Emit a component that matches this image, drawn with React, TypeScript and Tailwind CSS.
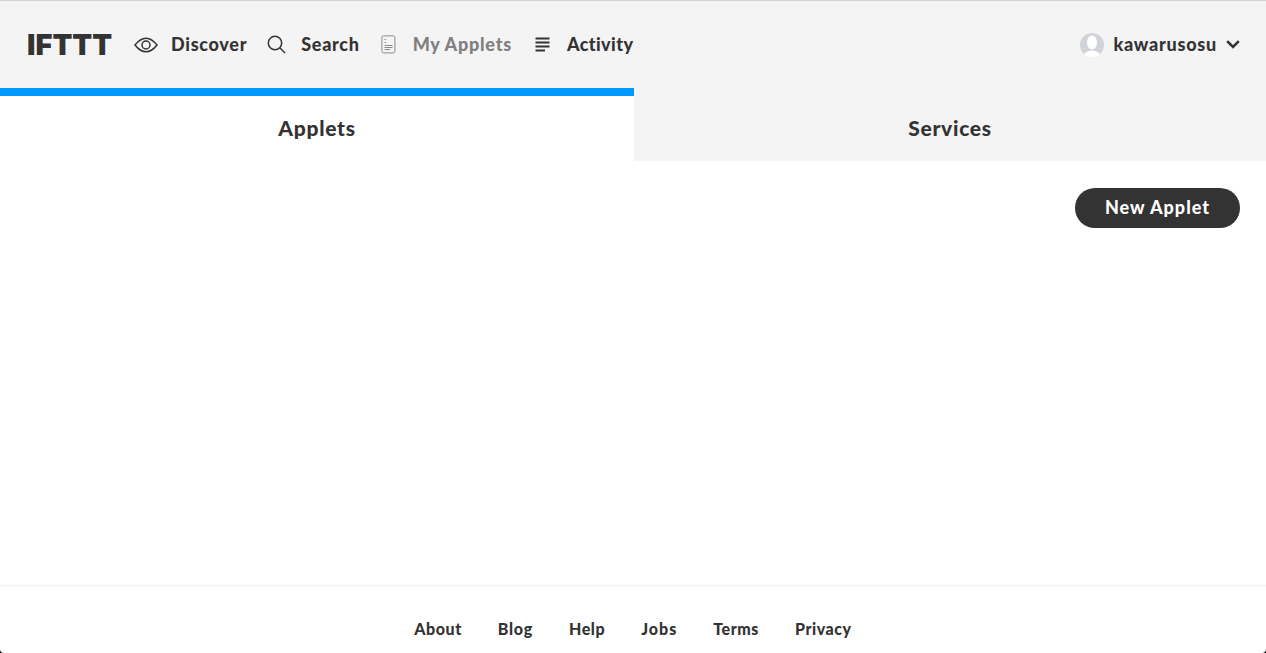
import React from "react";

const font = { fontFamily: "Lato, 'Open Sans', sans-serif" };

function Eye() {
  return (
    <svg width="24" height="16" viewBox="0 0 24 16" fill="none" stroke="#333" strokeWidth="1.5">
      <path d="M1 8C4.5 3.5 8 1.2 12 1.2S19.5 3.5 23 8C19.5 12.5 16 14.8 12 14.8S4.5 12.5 1 8Z" />
      <circle cx="12" cy="8" r="4" />
    </svg>
  );
}

function SearchIcon() {
  return (
    <svg width="19" height="19" viewBox="0 0 19 19" fill="none" stroke="#333" strokeWidth="1.5">
      <circle cx="8" cy="8" r="6.7" />
      <path d="M12.8 12.8L18 18" />
    </svg>
  );
}

function DocIcon() {
  return (
    <svg width="15" height="19" viewBox="0 0 15 19" fill="none" stroke="#8a8a8a" strokeWidth="1">
      <rect x="0.9" y="0.9" width="13" height="17" rx="1.5" />
      <path d="M3.5 4.5H5M3.5 7.5H5M3.5 10.5H11.5M3.5 12.5H11.5M3.5 14.5H9" />
    </svg>
  );
}

function ListIcon() {
  return (
    <svg width="15" height="15" viewBox="0 0 15 15" fill="none" stroke="#333" strokeWidth="2">
      <path d="M0.5 1.5H14.5M0.5 5.5H14.5M0.5 9.5H14.5M0.5 13.5H10" />
    </svg>
  );
}

function Avatar() {
  return (
    <svg width="24" height="24" viewBox="0 0 24 24">
      <circle cx="12" cy="12" r="12" fill="#d0d3d8" />
      <ellipse cx="12" cy="9.5" rx="5" ry="7" fill="#fff" />
      <path d="M4 21.5C6 18.5 9 17.5 12 17.5S18 18.5 20 21.5A12 12 0 0 1 4 21.5Z" fill="#fff" />
    </svg>
  );
}

function Chevron() {
  return (
    <svg width="14" height="9" viewBox="0 0 14 9" fill="none" stroke="#333" strokeWidth="2.6">
      <path d="M1.2 1.2L7 7L12.8 1.2" />
    </svg>
  );
}

function NavItem({ icon, label, className }: { icon: React.ReactNode; label: string; className: string }) {
  return (
    <a className={`flex items-center text-[18px] font-black ${className}`}>
      {icon}
      <span>{label}</span>
    </a>
  );
}

export default function App() {
  return (
    <div className="h-[653px] overflow-hidden bg-black">
      <div className="flex h-[653px] flex-col overflow-hidden rounded-b-[4px] bg-white" style={font}>
        <header className="flex h-[88px] items-center justify-between border-t border-[#d2d2d2] bg-[#f4f4f4] pl-[27px] pr-[26px]">
          <div className="flex items-center gap-[20px]">
            <span className="w-[87px] text-[29px] font-black leading-none text-[#333333] [font-family:Inter,sans-serif]">
              IFTTT
            </span>
            <NavItem icon={<Eye />} label="Discover" className="gap-[13px] tracking-[0.7px] text-[#333333]" />
            <NavItem icon={<SearchIcon />} label="Search" className="gap-[15px] tracking-[0.7px] text-[#333333]" />
            <NavItem icon={<DocIcon />} label="My Applets" className="ml-[1px] gap-[17px] tracking-[0.75px] text-[#808080]" />
            <NavItem icon={<ListIcon />} label="Activity" className="ml-[3px] gap-[17px] tracking-[0.4px] text-[#333333]" />
          </div>
          <div className="flex items-center gap-[9px] text-[18px] font-black tracking-[0.75px] text-[#333333]">
            <Avatar />
            <span>kawarusosu</span>
            <Chevron />
          </div>
        </header>

        <nav className="flex h-[73px] text-[21px] font-black tracking-[0.7px] text-[#333333]">
          <div className="flex w-[634px] items-center justify-center border-t-[8px] border-[#0099ff] bg-white pb-[2px]">Applets</div>
          <div className="flex flex-1 items-center justify-center bg-[#f4f4f4] pt-[6px]">Services</div>
        </nav>

        <main className="flex flex-1 items-start justify-end pr-[26px] pt-[27px]">
          <button className="flex h-[40px] w-[165px] items-center justify-center rounded-full bg-[#333333] pb-[2px] text-[18px] font-black tracking-[1px] text-white">
            New Applet
          </button>
        </main>

        <footer className="flex h-[68px] items-center justify-center gap-[36px] border-t border-[#f1f1f1] pt-[18px] text-[16px] font-black tracking-[0.55px] text-[#333333]">
          <a>About</a>
          <a className="tracking-[0.75px]">Blog</a>
          <a>Help</a>
          <a className="tracking-[1px]">Jobs</a>
          <a>Terms</a>
          <a>Privacy</a>
        </footer>
      </div>
    </div>
  );
}
